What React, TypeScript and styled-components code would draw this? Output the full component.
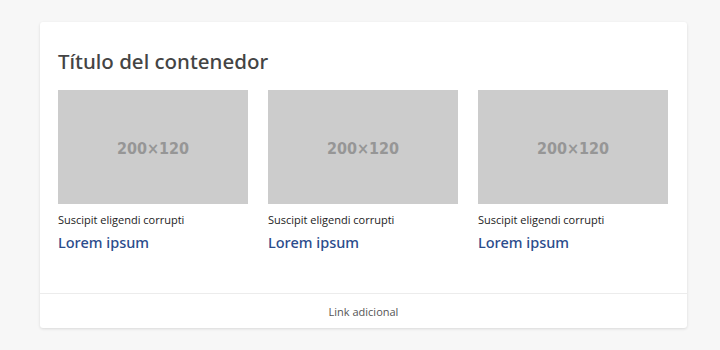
import React from 'react';
import styled, { createGlobalStyle } from 'styled-components';

const GlobalStyle = createGlobalStyle`
  body {
    margin: 0;
    background-color: #f7f7f7;
    font-family: "Open Sans", "Noto Sans", sans-serif;
  }
`;

const Page = styled.div`
  padding: 22px 33px 22px 40px;
`;

const Card = styled.section`
  background-color: #fff;
  border-radius: 3px;
  box-shadow: 0 1px 3px rgba(0, 0, 0, 0.12);
`;

const Body = styled.div`
  padding: 26px 19px 41px 18px;
`;

const Title = styled.h2`
  margin: 0 0 16px;
  font-family: "Noto Sans", "Open Sans", sans-serif;
  font-size: 20.5px;
  line-height: 26px;
  font-weight: 500;
  color: #444;
`;

const Grid = styled.div`
  display: grid;
  grid-template-columns: repeat(3, 190px);
  column-gap: 20px;
`;

const Item = styled.div`
  display: flex;
  flex-direction: column;
`;

const Placeholder = styled.div`
  box-sizing: border-box;
  height: 114px;
  padding-top: 2px;
  background-color: #cccccc;
  display: flex;
  align-items: center;
  justify-content: center;
  color: #969696;
  font-family: "DejaVu Sans Condensed", "DejaVu Sans", sans-serif;
  font-stretch: condensed;
  font-weight: bold;
  font-size: 16px;
`;

const Caption = styled.p`
  margin: 9px 0 0;
  font-size: 11px;
  line-height: 14px;
  color: #222;
`;

const ItemLink = styled.a`
  margin-top: 5px;
  font-family: "Noto Sans", "Open Sans", sans-serif;
  font-size: 14.5px;
  line-height: 20px;
  font-weight: 500;
  color: #2b4c8c;
  text-decoration: none;
`;

const Footer = styled.div`
  border-top: 1px solid #ececec;
  height: 34px;
  display: flex;
  align-items: center;
  justify-content: center;
`;

const FooterLink = styled.a`
  font-size: 11px;
  color: #555;
  text-decoration: none;
`;

const items = [1, 2, 3];

const App = () => (
  <>
    <GlobalStyle />
    <Page>
      <Card>
        <Body>
          <Title>Título del contenedor</Title>
          <Grid>
            {items.map((i) => (
              <Item key={i}>
                <Placeholder>200×120</Placeholder>
                <Caption>Suscipit eligendi corrupti</Caption>
                <ItemLink href="#">Lorem ipsum</ItemLink>
              </Item>
            ))}
          </Grid>
        </Body>
        <Footer>
          <FooterLink href="#">Link adicional</FooterLink>
        </Footer>
      </Card>
    </Page>
  </>
);

export default App;
